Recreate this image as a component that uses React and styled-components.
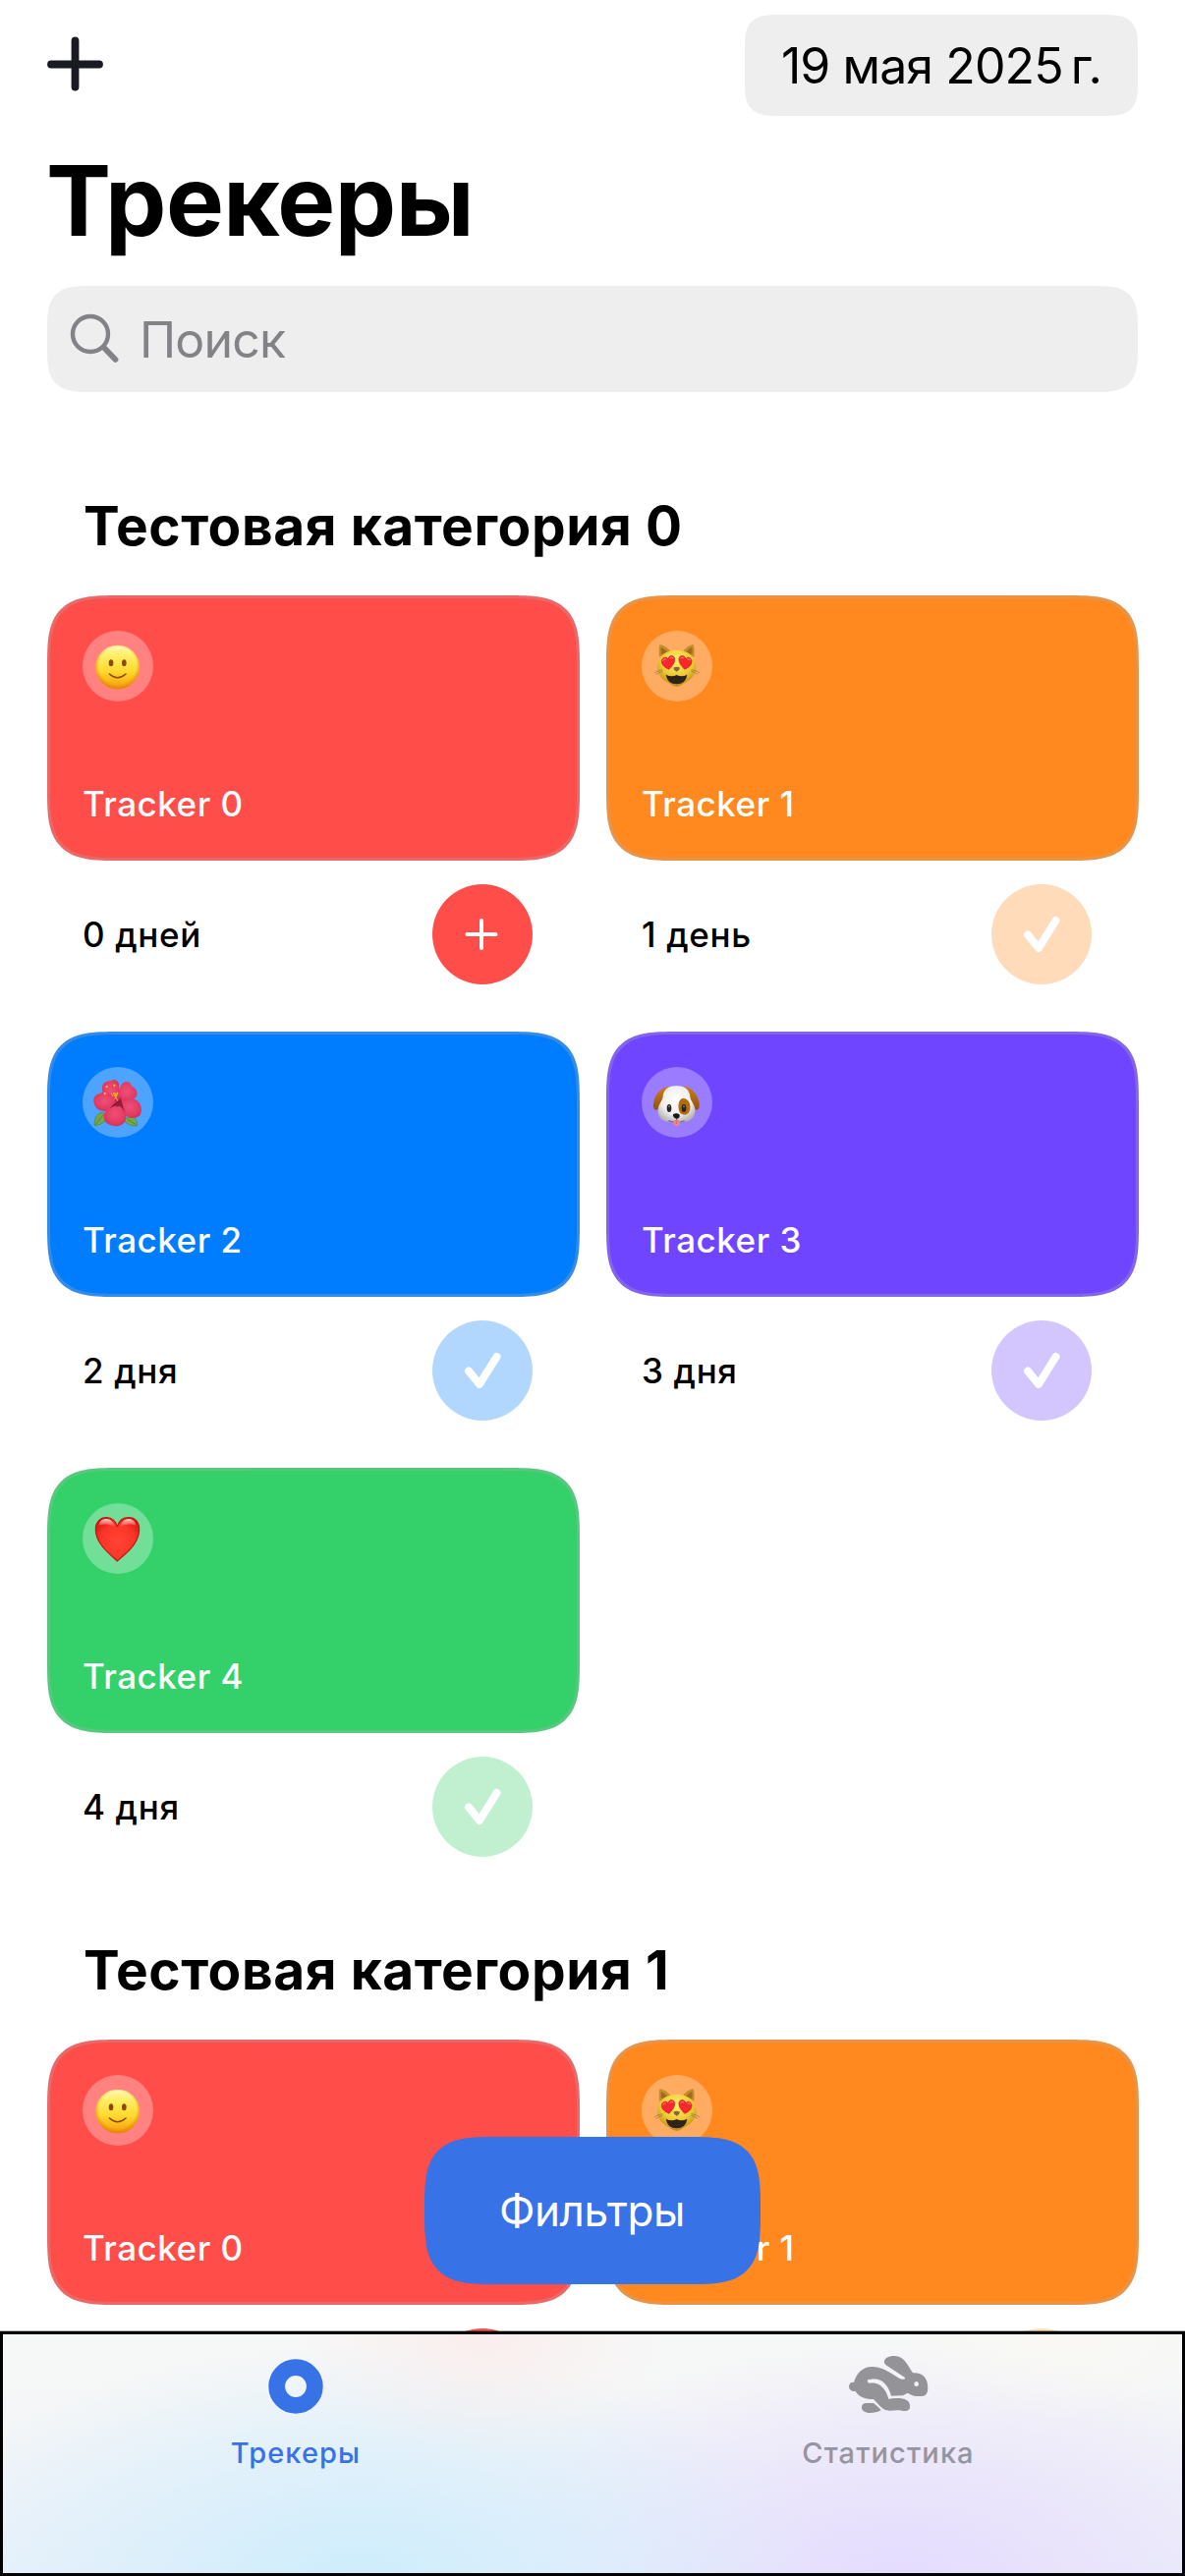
import React from "react";
import styled, { createGlobalStyle, css } from "styled-components";

const GlobalStyle = createGlobalStyle`
  *, *::before, *::after { box-sizing: border-box; }
  html, body { margin: 0; padding: 0; background: #fff; }
  body { overflow: hidden; }
`;

const smoothCorners = (radius) => css`
  border-radius: ${radius}px;
  @supports (corner-shape: superellipse(1.7)) {
    border-radius: ${Math.round(radius * 1.52)}px;
    corner-shape: superellipse(1.7);
  }
`;

const Screen = styled.div`
  position: relative;
  display: flex;
  flex-direction: column;
  width: 1206px;
  height: 2622px;
  overflow: hidden;
  background: #fff;
  color: #000;
  font-family: Inter, "Liberation Sans", sans-serif;
`;

const NavBar = styled.header`
  display: flex;
  align-items: center;
  justify-content: space-between;
  flex: none;
  height: 118px;
  padding: 15px 48px 0;
`;

const AddButton = styled.button`
  display: flex;
  margin: 0 0 3px;
  padding: 0;
  border: 0;
  background: none;
`;

const DatePill = styled.div`
  display: flex;
  align-items: center;
  justify-content: center;
  width: 400px;
  height: 103px;
  padding-top: 1px;
  background: #eee;
  font-size: 50px;
  letter-spacing: -0.9px;
  white-space: pre;
  ${smoothCorners(24)}
`;

const Title = styled.h1`
  flex: none;
  margin: 26px 0 27px;
  padding-left: 47px;
  font-size: 99px;
  font-weight: 700;
  line-height: 120px;
  letter-spacing: -0.5px;
`;

const SearchField = styled.div`
  display: flex;
  align-items: center;
  flex: none;
  height: 108px;
  margin: 0 48px;
  padding-left: 23px;
  gap: 19px;
  background: #eee;
  color: #838387;
  font-size: 50px;
  letter-spacing: -0.8px;
  ${smoothCorners(30)}

  span { padding-top: 1px; }
`;

const List = styled.main`
  display: flex;
  flex-direction: column;
  flex: none;
  margin-top: 69px;
  padding: 0 47px 0 48px;
`;

const SectionTitle = styled.h2`
  height: 138px;
  margin: 0;
  padding: 33px 0 0 37px;
  font-size: 55px;
  font-weight: 700;
  line-height: 68px;
  letter-spacing: 0.58px;
  white-space: nowrap;
`;

const Grid = styled.div`
  display: grid;
  grid-template-columns: 1fr 1fr;
  grid-auto-rows: 444px;
  column-gap: 27px;
`;

const Card = styled.div`
  display: flex;
  flex-direction: column;
  justify-content: space-between;
  height: 270px;
  padding: 33px;
  border: 3px solid rgba(174, 175, 180, 0.3);
  background: ${(p) => p.$color};
  ${smoothCorners(48)}
`;

const EmojiBadge = styled.div`
  display: flex;
  width: 72px;
  height: 72px;
  border-radius: 50%;
  background: rgba(255, 255, 255, 0.3);
`;

const CardName = styled.div`
  color: #fff;
  font-size: 35px;
  font-weight: 500;
  line-height: 44px;
  letter-spacing: 0.5px;
`;

const CardFooter = styled.div`
  display: flex;
  align-items: center;
  justify-content: space-between;
  padding: 24px 48px 0 36px;
  font-size: 35px;
  font-weight: 500;
  letter-spacing: 0.65px;
`;

const MarkButton = styled.button`
  display: flex;
  width: 102px;
  height: 102px;
  padding: 0;
  border: 0;
  border-radius: 50%;
  background: ${(p) => p.$color};
  opacity: ${(p) => (p.$done ? 0.3 : 1)};
`;

const FilterButton = styled.button`
  position: absolute;
  left: 432px;
  top: 2175px;
  width: 342px;
  height: 150px;
  padding: 0 1px 0 0;
  border: 0;
  background: #3772e7;
  color: #fff;
  font: 400 44px/150px Inter, "Liberation Sans", sans-serif;
  letter-spacing: -0.4px;
  ${smoothCorners(48)}
`;

const TabBar = styled.nav`
  position: absolute;
  left: 0;
  bottom: 0;
  display: grid;
  grid-template-columns: 1fr 1fr;
  width: 1206px;
  height: 249px;
  box-shadow: inset 0 0 0 3px #000, 0 -1px 0 rgba(0, 0, 0, 0.3);
  background:
    radial-gradient(ellipse 190px 130px at 490px 0, rgba(253, 234, 234, 0.75), rgba(253, 234, 234, 0.3) 50%, rgba(253, 234, 234, 0) 100%),
    radial-gradient(ellipse 170px 90px at 1080px 0, rgba(251, 249, 243, 0.7), rgba(251, 249, 243, 0) 100%),
    radial-gradient(ellipse 470px 235px at 365px 100%, #ceedfc, rgba(214, 238, 252, 0.75) 42%, rgba(225, 241, 251, 0) 100%),
    radial-gradient(ellipse 470px 235px at 915px 100%, #e5dcff, rgba(232, 224, 252, 0.75) 42%, rgba(238, 232, 250, 0) 100%),
    linear-gradient(#f6f7f7 20%, #ecf1f9 100%);
`;

const Tab = styled.div`
  display: flex;
  flex-direction: column;
  align-items: center;
  padding: 20px 1px 0 0;
  color: ${(p) => (p.$active ? "#3772e7" : "#9594a2")};
  font-size: 29px;
  font-weight: 500;
  line-height: 40px;
  letter-spacing: 1.1px;

  svg { margin-bottom: 12px; }
`;

const PlusGlyph = () => (
  <svg width="58" height="56" viewBox="0 0 58 56" stroke="#1a1b22" strokeWidth="7.8" strokeLinecap="round">
    <path d="M4 28.5H53M28.5 4.5V51.5" />
  </svg>
);

const SearchGlyph = () => (
  <svg width="52" height="52" viewBox="0 0 52 52" fill="none" stroke="#838387" strokeLinecap="round">
    <circle cx="21" cy="21" r="18" strokeWidth="4.4" />
    <path d="M34.5 34.5L46.5 47" strokeWidth="5.8" />
  </svg>
);

const MarkGlyph = ({ done }) => (
  <svg width="102" height="102" viewBox="0 0 102 102" fill="none" stroke="#fff" strokeLinecap="round" strokeLinejoin="round">
    {done ? <path d="M37 51.5L48 65L65.5 37" strokeWidth="8" /> : <path d="M35.5 51H64.5M50 37V65" strokeWidth="4" />}
  </svg>
);

const Smile = () => (
  <svg width="72" height="72" viewBox="0 0 216 216">
    <defs>
      <linearGradient id="smileFace" x1="0" y1="0" x2="0" y2="1">
        <stop offset="0" stopColor="#fff7b8" /><stop offset=".22" stopColor="#fff06a" />
        <stop offset=".6" stopColor="#fed92e" /><stop offset="1" stopColor="#f79a0c" />
      </linearGradient>
      <radialGradient id="smileRim" cx=".5" cy=".46" r=".54">
        <stop offset=".78" stopColor="#e88400" stopOpacity="0" /><stop offset="1" stopColor="#d97a00" stopOpacity=".75" />
      </radialGradient>
    </defs>
    <circle cx="107" cy="111" r="67" fill="url(#smileFace)" />
    <circle cx="107" cy="111" r="67" fill="url(#smileRim)" />
    <ellipse cx="87" cy="98" rx="7" ry="10.5" fill="#8b4a08" />
    <ellipse cx="127" cy="98" rx="7" ry="10.5" fill="#8b4a08" />
    <path d="M82 132Q107 154 132 132" fill="none" stroke="#8b4a08" strokeWidth="4.5" strokeLinecap="round" />
  </svg>
);

const HeartCat = () => (
  <svg width="72" height="72" viewBox="0 0 216 216">
    <defs>
      <radialGradient id="catFace" cx=".5" cy=".3" r=".72">
        <stop offset="0" stopColor="#fff26b" /><stop offset=".55" stopColor="#eecb35" /><stop offset="1" stopColor="#b98212" />
      </radialGradient>
    </defs>
    <path d="M54 80Q51 50 56 42Q76 46 88 64Z" fill="#c28d2b" />
    <path d="M160 80Q163 50 157 42Q138 46 126 64Z" fill="#c28d2b" />
    <path d="M60 72Q58 56 60 51Q72 56 78 66Z" fill="#9f6a1e" />
    <path d="M154 72Q156 56 153 51Q142 56 136 66Z" fill="#9f6a1e" />
    <path d="M107 59C140 59 164 78 167 109C169 130 153 148 136 157C121 166 114 171 107 171C100 171 92 166 78 157C61 148 46 130 48 109C50 78 74 59 107 59Z" fill="url(#catFace)" />
    <path d="M64 119Q50 120 39 129M64 124Q52 126 44 134M151 119Q165 120 178 129M151 124Q163 126 171 134" stroke="#8a7446" strokeWidth="2" fill="none" />
    <path d="M84 118C76 114 60 107 61 92C62 82 75 78 80 86C84 74 98 73 101 85C103 98 92 109 84 118Z" fill="#fb2630" stroke="#c31b1d" strokeWidth="2" />
    <path d="M131 118C123 109 112 98 114 85C117 73 131 74 135 86C140 78 152 82 153 92C154 107 139 114 131 118Z" fill="#fb2630" stroke="#c31b1d" strokeWidth="2" />
    <path d="M65 91Q67 85 73 86M87 84Q91 79 96 83M119 84Q123 79 128 83M141 87Q146 85 149 89" stroke="#ff8a7c" strokeWidth="3" strokeLinecap="round" fill="none" />
    <path d="M97 113Q107 107 117 113Q116 121 107 125Q98 121 97 113Z" fill="#8d6638" />
    <path d="M74 134Q91 143 107 135Q123 143 139 134Q135 163 107 163Q79 163 74 134Z" fill="#30231c" />
  </svg>
);

const Hibiscus = () => (
  <svg width="72" height="72" viewBox="0 0 216 216">
    <defs>
      <radialGradient id="petal" cx=".5" cy=".45" r=".62">
        <stop offset="0" stopColor="#ee5078" /><stop offset=".7" stopColor="#e23a62" /><stop offset="1" stopColor="#cc2850" />
      </radialGradient>
    </defs>
    <path d="M36 179Q35 145 61 138Q76 149 69 164Q57 178 36 179Z" fill="#74a94a" stroke="#4c8430" strokeWidth="2" />
    <path d="M167 180Q137 180 127 163Q140 149 158 156Q169 165 167 180Z" fill="#74a94a" stroke="#4c8430" strokeWidth="2" />
    <path d="M39 176L65 145M163 176L138 160" stroke="#3f7529" strokeWidth="2" />
    <path d="M98 106C73 104 55 79 61 58C65 42 80 43 87 42C101 32 114 46 111 62L112 104Z" fill="url(#petal)" />
    <path d="M104 104C105 80 112 65 119 54C128 40 148 44 149 58C164 64 172 81 162 94C145 102 125 99 106 110Z" fill="url(#petal)" />
    <path d="M103 112C89 78 62 74 54 81C36 82 30 100 36 113C41 132 64 139 83 132L103 122Z" fill="url(#petal)" />
    <path d="M107 111C121 92 153 92 165 102C180 111 183 133 176 146C162 160 141 157 130 147Z" fill="url(#petal)" />
    <path d="M105 112C86 118 66 132 65 151C65 170 81 179 94 179C109 184 125 176 130 164C139 146 130 124 116 111Z" fill="url(#petal)" />
    <path d="M82 128Q98 106 118 99Q121 113 130 140Q117 113 106 121Q97 116 82 128Z" fill="#7d132e" opacity=".75" />
    <path d="M104 110L99 92M108 110L117 93" stroke="#9c1737" strokeWidth="3" />
    <path d="M87 82H110M90 88H108M96 78L107 104M107 77L98 100" stroke="#f0b81c" strokeWidth="4" strokeDasharray="4 2" />
    <g fill="#f2474c">
      <circle cx="75" cy="63" r="8" /><circle cx="98" cy="59" r="8" /><circle cx="69" cy="84" r="7" />
    </g>
    <g fill="#ffb3ab"><circle cx="74" cy="60" r="3" /><circle cx="97" cy="56" r="3" /><circle cx="68" cy="81" r="3" /></g>
  </svg>
);

const Dog = () => (
  <svg width="72" height="72" viewBox="0 0 216 216">
    <defs>
      <radialGradient id="dogFace" cx=".5" cy=".38" r=".62">
        <stop offset="0" stopColor="#fff" /><stop offset=".65" stopColor="#efeeec" /><stop offset="1" stopColor="#b9b5b2" />
      </radialGradient>
      <linearGradient id="dogEar" x1="0" y1="0" x2="0" y2="1"><stop offset="0" stopColor="#cc7d19" /><stop offset="1" stopColor="#91520a" /></linearGradient>
    </defs>
    <path d="M87 60C60 60 42 83 37 106C32 127 41 137 50 128C62 116 62 84 87 60Z" fill="url(#dogEar)" />
    <path d="M126 60C153 60 170 83 175 106C180 127 171 137 163 128C151 116 151 84 126 60Z" fill="url(#dogEar)" />
    <path d="M106 58C132 57 146 70 148 91C149 105 163 113 163 134C163 158 143 167 125 167C119 171 93 171 87 167C69 167 50 158 50 134C50 113 64 105 65 91C67 70 81 57 106 58Z" fill="url(#dogFace)" />
    <path d="M126 96C141 95 150 111 148 127C146 145 133 150 121 143C110 137 108 98 126 96Z" fill="#b36b0d" />
    <ellipse cx="84" cy="126" rx="7" ry="12" fill="#252525" /><ellipse cx="129" cy="126" rx="7" ry="12" fill="#252525" />
    <ellipse cx="84" cy="121" rx="3" ry="3" fill="#777" /><ellipse cx="129" cy="121" rx="3" ry="3" fill="#777" />
    <path d="M96 145Q107 138 116 146Q118 155 107 159Q94 154 96 145Z" fill="#171717" />
    <path d="M107 158V164M82 164Q97 172 107 163Q118 172 131 164" stroke="#56514d" strokeWidth="2.5" fill="none" />
    <path d="M97 165Q107 159 117 165C118 175 113 181 107 181C100 181 96 174 97 165Z" fill="#f07f92" />
    <path d="M107 166V174" stroke="#d5536d" strokeWidth="2" />
  </svg>
);

const Heart = () => (
  <svg width="72" height="72" viewBox="0 0 216 216">
    <defs>
      <radialGradient id="heartFill" cx=".5" cy=".55" r=".6">
        <stop offset="0" stopColor="#ff4534" /><stop offset=".65" stopColor="#fb3529" /><stop offset="1" stopColor="#e11712" />
      </radialGradient>
      <linearGradient id="heartShine" x1="0" y1="0" x2="0" y2="1">
        <stop offset="0" stopColor="#fff" stopOpacity=".8" /><stop offset="1" stopColor="#fff" stopOpacity="0" />
      </linearGradient>
    </defs>
    <path d="M106 177C87 158 40 126 40 80C40 58 54 44 73 44C91 44 103 56 106 72C110 56 122 44 141 44C160 44 173 58 173 80C173 126 126 158 106 177Z" fill="url(#heartFill)" stroke="#c41310" strokeWidth="3.5" strokeLinejoin="round" />
    <path d="M49 69C53 52 63 48 73 48C85 48 95 58 99 72C78 63 67 62 49 69ZM114 72C118 58 128 48 141 48C151 48 160 54 164 69C147 62 134 63 114 72Z" fill="url(#heartShine)" />
  </svg>
);

const TargetGlyph = () => (
  <svg width="72" height="72" viewBox="0 0 72 72" fill="none">
    <circle cx="36" cy="36" r="19.3" stroke="#3772e7" strokeWidth="16.8" />
  </svg>
);

const RabbitGlyph = () => (
  <svg width="84" height="72" viewBox="186 39 252 216" fill="#949398">
    <path
      fillRule="evenodd"
      d="M192 148C192 139 199 133 207 135C215 105 236 87 262 87C290 87 311 101 332 114C341 120 349 126 358 125C363 125 365 122 362 119L307 83C296 76 298 65 308 59C321 53 339 52 353 61C368 71 376 91 387 106C412 104 429 117 432 141C435 164 430 177 413 177C398 178 384 176 371 167C363 171 359 175 351 175L321 176C315 151 300 129 278 125C268 123 257 125 251 126C247 129 248 134 253 137C265 136 275 136 284 142C302 153 309 171 313 186C330 183 354 181 368 189C377 194 380 205 377 215C373 223 363 222 354 221C337 218 318 223 307 220C299 218 292 212 286 206L267 186C243 187 222 179 212 162C201 163 192 158 192 148ZM398 132A7 7.5 0 1 0 398 147A7 7.5 0 1 0 398 132Z"
    />
    <path d="M245 198H267C275 204 282 211 290 219C281 226 269 228 257 228C240 228 230 221 231 210C231 202 237 198 245 198Z" />
  </svg>
);

const trackers = [
  { name: "Tracker 0", days: "0 дней", color: "#ff4d4a", Emoji: Smile, done: false },
  { name: "Tracker 1", days: "1 день", color: "#ff891f", Emoji: HeartCat, done: true },
  { name: "Tracker 2", days: "2 дня", color: "#007dff", Emoji: Hibiscus, done: true },
  { name: "Tracker 3", days: "3 дня", color: "#6f45ff", Emoji: Dog, done: true },
  { name: "Tracker 4", days: "4 дня", color: "#34d16a", Emoji: Heart, done: true },
];

const sections = [
  { title: "Тестовая категория 0", items: trackers },
  { title: "Тестовая категория 1", items: trackers.slice(0, 2) },
];

const Tracker = ({ name, days, color, Emoji, done }) => (
  <div>
    <Card $color={color}>
      <EmojiBadge><Emoji /></EmojiBadge>
      <CardName>{name}</CardName>
    </Card>
    <CardFooter>
      <span>{days}</span>
      <MarkButton $color={color} $done={done}><MarkGlyph done={done} /></MarkButton>
    </CardFooter>
  </div>
);

export default function App() {
  return (
    <Screen>
      <GlobalStyle />
      <NavBar>
        <AddButton><PlusGlyph /></AddButton>
        <DatePill>{"19 мая 2025\u2009г."}</DatePill>
      </NavBar>
      <Title>Трекеры</Title>
      <SearchField><SearchGlyph /><span>Поиск</span></SearchField>
      <List>
        {sections.map((section) => (
          <section key={section.title}>
            <SectionTitle>{section.title}</SectionTitle>
            <Grid>
              {section.items.map((item) => <Tracker key={item.name} {...item} />)}
            </Grid>
          </section>
        ))}
      </List>
      <FilterButton>Фильтры</FilterButton>
      <TabBar>
        <Tab $active><TargetGlyph /><span>Трекеры</span></Tab>
        <Tab><RabbitGlyph /><span>Статистика</span></Tab>
      </TabBar>
    </Screen>
  );
}
